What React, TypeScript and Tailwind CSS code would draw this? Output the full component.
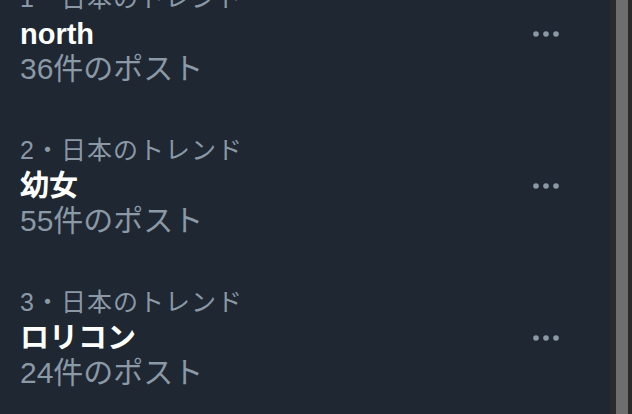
const trends = [
  { rank: 1, title: 'north', posts: '36件のポスト' },
  { rank: 2, title: '幼女', posts: '55件のポスト' },
  { rank: 3, title: 'ロリコン', posts: '24件のポスト' },
]

function MoreDots() {
  return (
    <svg width="28" height="8" viewBox="0 0 28 8" className="text-[#8b98a5]">
      <circle cx="4" cy="4" r="2.8" fill="currentColor" />
      <circle cx="14" cy="4" r="2.8" fill="currentColor" />
      <circle cx="24" cy="4" r="2.8" fill="currentColor" />
    </svg>
  )
}

export default function App() {
  return (
    <div
      className="flex h-[414px] w-[632px] overflow-hidden bg-[#1e2732]"
      style={{ fontFamily: '"Liberation Sans", "Noto Sans CJK JP", sans-serif' }}
    >
      <div className="w-[610px] shrink-0 overflow-hidden">
        <div className="-mt-[43px]">
          {trends.map((t) => (
            <div key={t.rank} className="flex items-start justify-between pb-[23px] pl-[20px] pr-[50px] pt-[24px]">
              <div className="min-w-0">
                <p className="text-[25px] leading-[35px] tracking-[1px] text-[#8b98a5]">{t.rank}・日本のトレンド</p>
                <p className="pt-[1px] text-[29px] font-bold leading-[35px] text-white">{t.title}</p>
                <p className="-mt-[1px] text-[30px] leading-[35px] text-[#8b98a5]">{t.posts}</p>
              </div>
              <div className="mt-[49px] flex">
                <MoreDots />
              </div>
            </div>
          ))}
        </div>
      </div>
      <div className="w-[6px] shrink-0 bg-[#2b2b2b]" />
      <div className="w-[12px] shrink-0 bg-[#6e6e6e]" />
      <div className="w-[4px] shrink-0 bg-[#2b2b2b]" />
    </div>
  )
}
